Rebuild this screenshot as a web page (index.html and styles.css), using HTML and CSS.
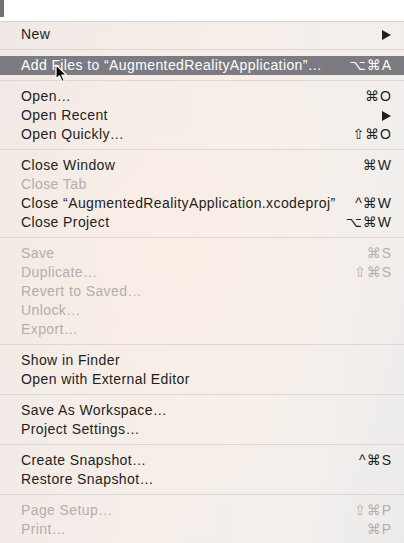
FILE: index.html
```html
<!DOCTYPE html>
<html>
<head>
<meta charset="utf-8">
<link rel="stylesheet" href="styles.css">
</head>
<body>
<div class="top"><div class="strip"></div></div>
<div class="menu">
  <div class="row"><span class="label">New</span><span class="arrow"></span></div>
  <div class="sep"></div>
  <div class="row hl"><span class="label">Add Files to “AugmentedRealityApplication”…</span><span class="key">⌥⌘A</span></div>
  <div class="sep"></div>
  <div class="row"><span class="label">Open…</span><span class="key">⌘O</span></div>
  <div class="row"><span class="label">Open Recent</span><span class="arrow"></span></div>
  <div class="row"><span class="label">Open Quickly…</span><span class="key">⇧⌘O</span></div>
  <div class="sep"></div>
  <div class="row"><span class="label">Close Window</span><span class="key">⌘W</span></div>
  <div class="row dis"><span class="label">Close Tab</span></div>
  <div class="row"><span class="label">Close “AugmentedRealityApplication.xcodeproj”</span><span class="key">^⌘W</span></div>
  <div class="row"><span class="label">Close Project</span><span class="key">⌥⌘W</span></div>
  <div class="sep"></div>
  <div class="row dis"><span class="label">Save</span><span class="key">⌘S</span></div>
  <div class="row dis"><span class="label">Duplicate…</span><span class="key">⇧⌘S</span></div>
  <div class="row dis"><span class="label">Revert to Saved…</span></div>
  <div class="row dis"><span class="label">Unlock…</span></div>
  <div class="row dis"><span class="label">Export…</span></div>
  <div class="sep"></div>
  <div class="row"><span class="label">Show in Finder</span></div>
  <div class="row"><span class="label">Open with External Editor</span></div>
  <div class="sep"></div>
  <div class="row"><span class="label">Save As Workspace…</span></div>
  <div class="row"><span class="label">Project Settings…</span></div>
  <div class="sep"></div>
  <div class="row"><span class="label">Create Snapshot…</span><span class="key">^⌘S</span></div>
  <div class="row"><span class="label">Restore Snapshot…</span></div>
  <div class="sep"></div>
  <div class="row dis"><span class="label">Page Setup…</span><span class="key">⇧⌘P</span></div>
  <div class="row dis"><span class="label">Print…</span><span class="key">⌘P</span></div>
</div>
<svg class="cursor" width="14" height="20" viewBox="0 0 14 20">
  <path d="M1 1 L1 15 L4.5 11.8 L7 17.5 L9.2 16.5 L6.8 11 L11.5 11 Z" fill="#000" stroke="#fff" stroke-width="1.2" stroke-linejoin="round"/>
</svg>
</body>
</html>
```

FILE: styles.css
```css
html, body {
  margin: 0;
  padding: 0;
}
body {
  width: 404px;
  height: 543px;
  overflow: hidden;
  position: relative;
  background: #ffffff;
  font-family: "Liberation Sans", "DejaVu Sans", sans-serif;
  font-size: 14px;
}
.top {
  height: 21px;
  background: #ffffff;
  position: relative;
}
.strip {
  width: 4px;
  height: 17px;
  background: #727176;
}
.menu {
  border-top: 1px solid #d8d2cf;
  padding: 3px 0 4px;
  background:
    radial-gradient(ellipse 260px 320px at 170px 230px, rgba(250, 238, 230, 0.9), rgba(250, 238, 230, 0) 100%),
    linear-gradient(100deg, #efe8e5 0%, #f5eeea 45%, #f2efed 80%, #ecebeb 100%);
  color: #221e1c;
}
.row {
  height: 19px;
  line-height: 19px;
  display: flex;
  justify-content: space-between;
  align-items: center;
  padding: 0 13px 0 21px;
  white-space: nowrap;
}
.label {
  letter-spacing: 0.4px;
}
.row.hl {
  background: #7c7b81;
  color: #ffffff;
}
.row.dis {
  color: #b3aeab;
}
.key {
  font-family: "Liberation Sans", "DejaVu Sans", sans-serif;
  letter-spacing: 1px;
  margin-right: -1px;
}
.arrow {
  width: 0;
  height: 0;
  border-top: 5px solid transparent;
  border-bottom: 5px solid transparent;
  border-left: 9px solid #221e1c;
}
.sep {
  height: 12px;
  box-sizing: border-box;
  padding-top: 5px;
}
.sep::before {
  content: "";
  display: block;
  height: 1px;
  background: #ddd6d3;
}
.cursor {
  position: absolute;
  left: 55px;
  top: 64px;
}
```
